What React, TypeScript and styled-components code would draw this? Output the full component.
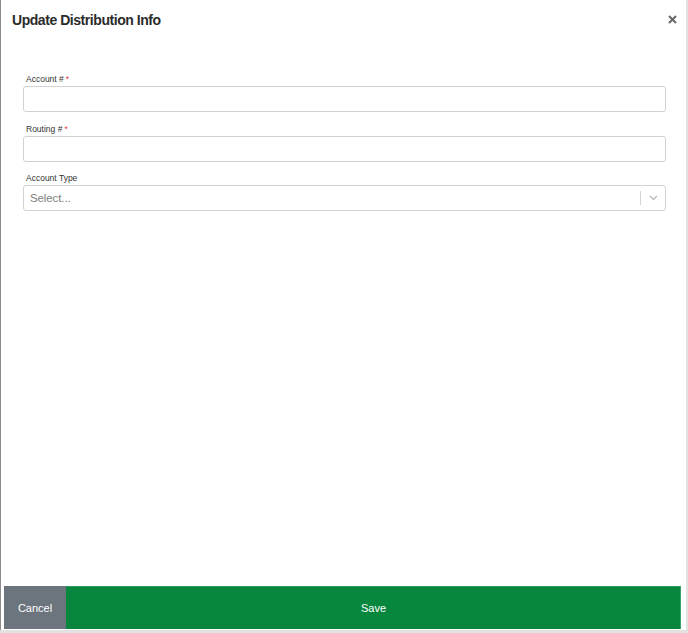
import React from "react";
import styled, { createGlobalStyle } from "styled-components";

const Global = createGlobalStyle`
  html, body { margin: 0; padding: 0; background: #e2e2e2; }
  body { font-family: "Liberation Sans", Arial, Helvetica, sans-serif; }
  * { box-sizing: border-box; }
`;

const Page = styled.div`
  width: 688px;
  height: 633px;
  background: #e2e2e2;
  overflow: hidden;
`;

const Modal = styled.div`
  width: 686px;
  height: 630px;
  background: #fff;
  border-left: 1px solid #8c8c8c;
  display: flex;
  flex-direction: column;
`;

const Header = styled.div`
  height: 40px;
  display: flex;
  align-items: center;
  justify-content: space-between;
  padding: 0 9px 0 11px;
`;

const Title = styled.h1`
  margin: 0;
  font-size: 14px;
  font-weight: 700;
  letter-spacing: -0.45px;
  color: #2b2b2b;
  line-height: 40px;
`;

const CloseButton = styled.button`
  border: 0;
  background: none;
  padding: 0;
  width: 10px;
  height: 10px;
  display: flex;
  align-items: center;
  justify-content: center;
  margin-top: -2px;
  cursor: pointer;
`;

const Body = styled.div`
  flex: 1;
  padding: 33px 20px 0 22px;
  display: flex;
  flex-direction: column;
  gap: 11px;
`;

const Field = styled.div<{ $tight?: boolean }>`
  display: flex;
  flex-direction: column;
  margin-top: ${(p) => (p.$tight ? "-1px" : "0")};
`;

const Label = styled.label`
  font-size: 8.5px;
  line-height: 12px;
  color: #333;
  padding-left: 3px;
  margin-bottom: 1px;
`;

const Required = styled.span`
  color: #e03a3a;
  margin-left: 2px;
`;

const Input = styled.input`
  height: 26px;
  width: 100%;
  border: 1px solid #d2d2d2;
  border-radius: 3px;
  outline: none;
  font-family: inherit;
  font-size: 11px;
  padding: 0 7px;
`;

const SelectBox = styled.div`
  height: 26px;
  border: 1px solid #d2d2d2;
  border-radius: 3px;
  display: flex;
  align-items: center;
`;

const Placeholder = styled.span`
  flex: 1;
  font-size: 11.5px;
  color: #808080;
  padding-left: 6px;
  letter-spacing: -0.1px;
`;

const Separator = styled.span`
  width: 1px;
  height: 14px;
  background: #d4d4d4;
`;

const Chevron = styled.span`
  width: 24px;
  display: flex;
  align-items: center;
  justify-content: center;
`;

const Footer = styled.div`
  height: 43px;
  margin: 0 5px 1px 3px;
  display: flex;
`;

const FooterButton = styled.button<{ $variant: "cancel" | "save" }>`
  border: 0;
  margin: 0;
  height: 100%;
  font-family: inherit;
  font-size: 11px;
  color: #fff;
  cursor: pointer;
  background: ${(p) => (p.$variant === "cancel" ? "#6c747e" : "#07873d")};
  width: ${(p) => (p.$variant === "cancel" ? "62px" : "auto")};
  flex: ${(p) => (p.$variant === "cancel" ? "0 0 62px" : "1")};
  box-shadow: ${(p) => (p.$variant === "save" ? "inset -1px 0 0 #3aa36a, inset 0 1px 0 #2e9c5f" : "none")};
`;

export default function App() {
  return (
    <>
      <Global />
      <Page>
        <Modal>
          <Header>
            <Title>Update Distribution Info</Title>
            <CloseButton aria-label="Close">
              <svg width="9" height="9" viewBox="0 0 9 9">
                <path d="M1 1 L8 8 M8 1 L1 8" stroke="#666" strokeWidth="2" strokeLinecap="butt" />
              </svg>
            </CloseButton>
          </Header>
          <Body>
            <Field>
              <Label>
                Account #<Required>*</Required>
              </Label>
              <Input />
            </Field>
            <Field>
              <Label>
                Routing #<Required>*</Required>
              </Label>
              <Input />
            </Field>
            <Field $tight>
              <Label>Account Type</Label>
              <SelectBox>
                <Placeholder>Select...</Placeholder>
                <Separator />
                <Chevron>
                  <svg width="9" height="6" viewBox="0 0 9 6">
                    <path d="M1 1 L4.5 4.5 L8 1" fill="none" stroke="#b5b5b5" strokeWidth="1.2" />
                  </svg>
                </Chevron>
              </SelectBox>
            </Field>
          </Body>
          <Footer>
            <FooterButton $variant="cancel">Cancel</FooterButton>
            <FooterButton $variant="save">Save</FooterButton>
          </Footer>
        </Modal>
      </Page>
    </>
  );
}
